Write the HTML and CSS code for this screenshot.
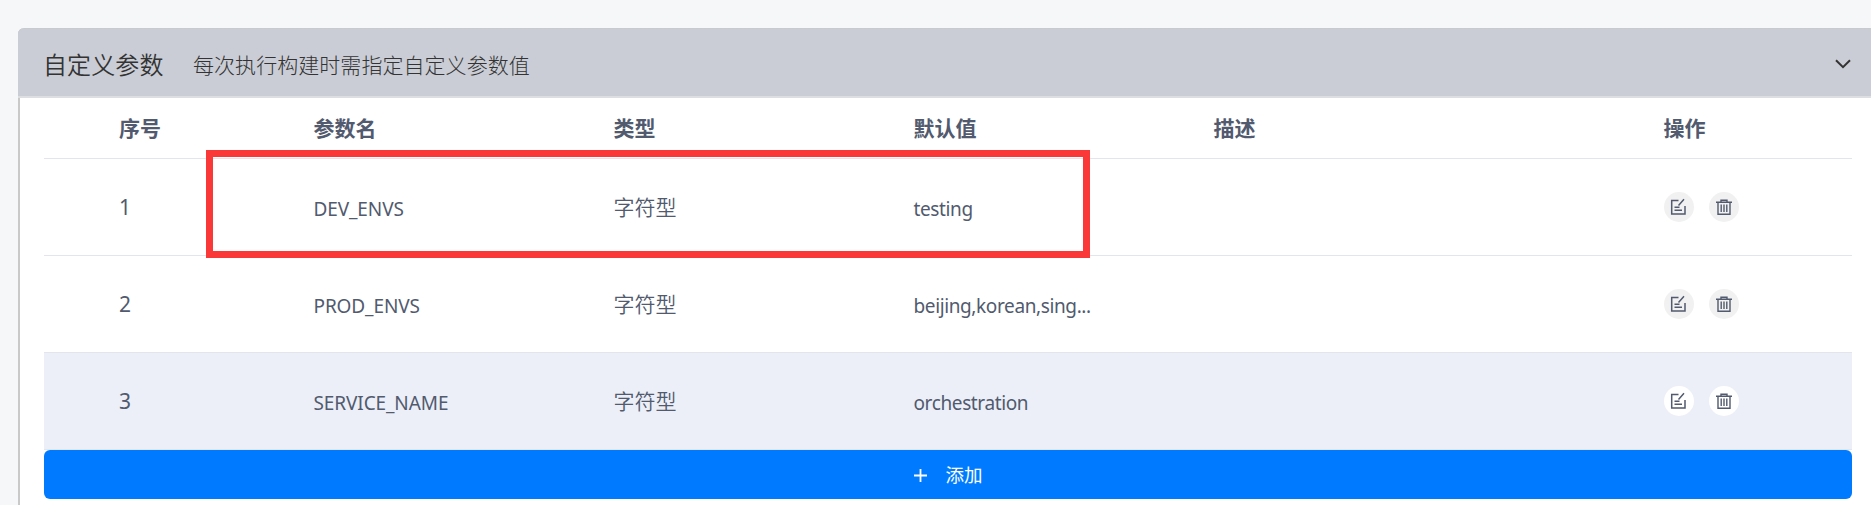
FILE: index.html
```html
<!DOCTYPE html>
<html lang="zh-CN">
<head>
<meta charset="utf-8">
<title>自定义参数</title>
<link rel="stylesheet" href="styles.css">
</head>
<body>
<svg width="0" height="0" class="defs">
  <symbol id="edit" viewBox="0 0 18 18"><path d="M8.5 2.5H1.7V16H15V8M8.5 7.5L14 1.2M4.5 9.3H9.5M4.5 12.3H12" fill="none" stroke="currentColor" stroke-width="1.5"/></symbol>
  <symbol id="trash" viewBox="0 0 18 18"><path d="M1 4.3H17M6 4V2.2H12V4M3 4.5V16.3H15V4.5M6.2 6.5V14M9 6.5V14M11.8 6.5V14" fill="none" stroke="currentColor" stroke-width="1.4"/></symbol>
</svg>
<section class="panel">
  <header class="panel-head">
    <h2 class="title">自定义参数</h2>
    <p class="subtitle">每次执行构建时需指定自定义参数值</p>
    <svg class="chevron" viewBox="0 0 16 10"><path d="M1 1.2L8 8.2L15 1.2" fill="none" stroke="currentColor" stroke-width="2"/></svg>
  </header>
  <div class="table">
    <div class="row head"><span>序号</span><span>参数名</span><span>类型</span><span>默认值</span><span>描述</span><span>操作</span></div>
    <div class="row"><span>1</span><span class="text name">DEV_ENVS</span><span class="type">字符型</span><span class="text value">testing</span><span></span><span class="actions"><i><svg><use href="#edit"/></svg></i><i><svg><use href="#trash"/></svg></i></span></div>
    <div class="row"><span>2</span><span class="text name">PROD_ENVS</span><span class="type">字符型</span><span class="text value">beijing,korean,sing...</span><span></span><span class="actions"><i><svg><use href="#edit"/></svg></i><i><svg><use href="#trash"/></svg></i></span></div>
    <div class="row active"><span>3</span><span class="text name">SERVICE_NAME</span><span class="type">字符型</span><span class="text value">orchestration</span><span></span><span class="actions"><i><svg><use href="#edit"/></svg></i><i><svg><use href="#trash"/></svg></i></span></div>
    <button class="add"><svg viewBox="0 0 13 13"><path d="M6.5 0V13M0 6.5H13" stroke="currentColor" stroke-width="1.8"/></svg><span>添加</span></button>
  </div>
</section>
<div class="highlight"></div>
</body>
</html>
```
FILE: styles.css
```css
* { box-sizing: border-box; }
body {
  margin: 0;
  height: 505px;
  overflow: hidden;
  padding: 28px 0 0 18px;
  background: #f5f7f9;
  color: #515a6e;
  font: 21px/30px "Noto Sans", "Noto Sans CJK SC", sans-serif;
}
.defs { position: absolute; }
.panel {
  height: 490px;
  background: #fff;
  border-left: 2px solid #c9c9ca;
  border-radius: 6px 0 0 0;
}
.panel-head {
  display: flex;
  align-items: center;
  height: 70px;
  margin-left: -2px;
  padding: 1px 20px 0 26px;
  background: #cacdd5;
  border-bottom: 2px solid #dcdee2;
  border-top: 1px solid #c9cacc;
  border-radius: 6px 0 0 0;
  color: #333;
}
.title { margin: 2px 0 0 -1px; font-size: 24px; font-weight: 350; letter-spacing: 0.1px; }
.subtitle { margin: 1px 0 0 29.5px; font-size: 21px; font-weight: 300; letter-spacing: 0.05px; }
.title, .subtitle, .type { font-family: "Noto Sans CJK SC", sans-serif; white-space: nowrap; }
.chevron { width: 16px; height: 10px; margin-left: auto; margin-top: 1px; }
.table { width: 1832px; padding: 0 0 0 24px; }
.row {
  display: grid;
  grid-template-columns: 194.5px 300px 300px 300px 450px 1fr;
  align-items: center;
  height: 97px;
  padding-left: 75px;
  border-bottom: 1px solid #e3e5ec;
}
.head { height: 61px; font-weight: 700; }
.active { background: #eceff7; }
.type { font-weight: 350; padding-bottom: 2px; }
.text { font-size: 19px; padding-top: 4px; white-space: nowrap; }
.name { letter-spacing: -0.1px; }
.value { letter-spacing: -0.38px; }
.actions { display: flex; gap: 15px; }
.actions i {
  display: flex;
  align-items: center;
  justify-content: center;
  width: 30px;
  height: 30px;
  border-radius: 50%;
  background: #f1f1f1;
}
.active i { background: #fff; }
.actions svg { width: 18px; height: 18px; }
.add {
  display: flex;
  align-items: center;
  justify-content: center;
  gap: 18px;
  width: 100%;
  height: 49px;
  padding: 0 0 2px 1px;
  border: 0;
  border-radius: 6px;
  background: #007bff;
  color: #fff;
  font: 400 18.5px/26px "Noto Sans CJK SC", sans-serif;
}
.add svg { width: 13px; height: 13px; margin-top: 4px; }
.highlight {
  position: absolute;
  left: 206px;
  top: 150px;
  width: 884px;
  height: 108px;
  border: 7px solid #fb3838;
}
```
